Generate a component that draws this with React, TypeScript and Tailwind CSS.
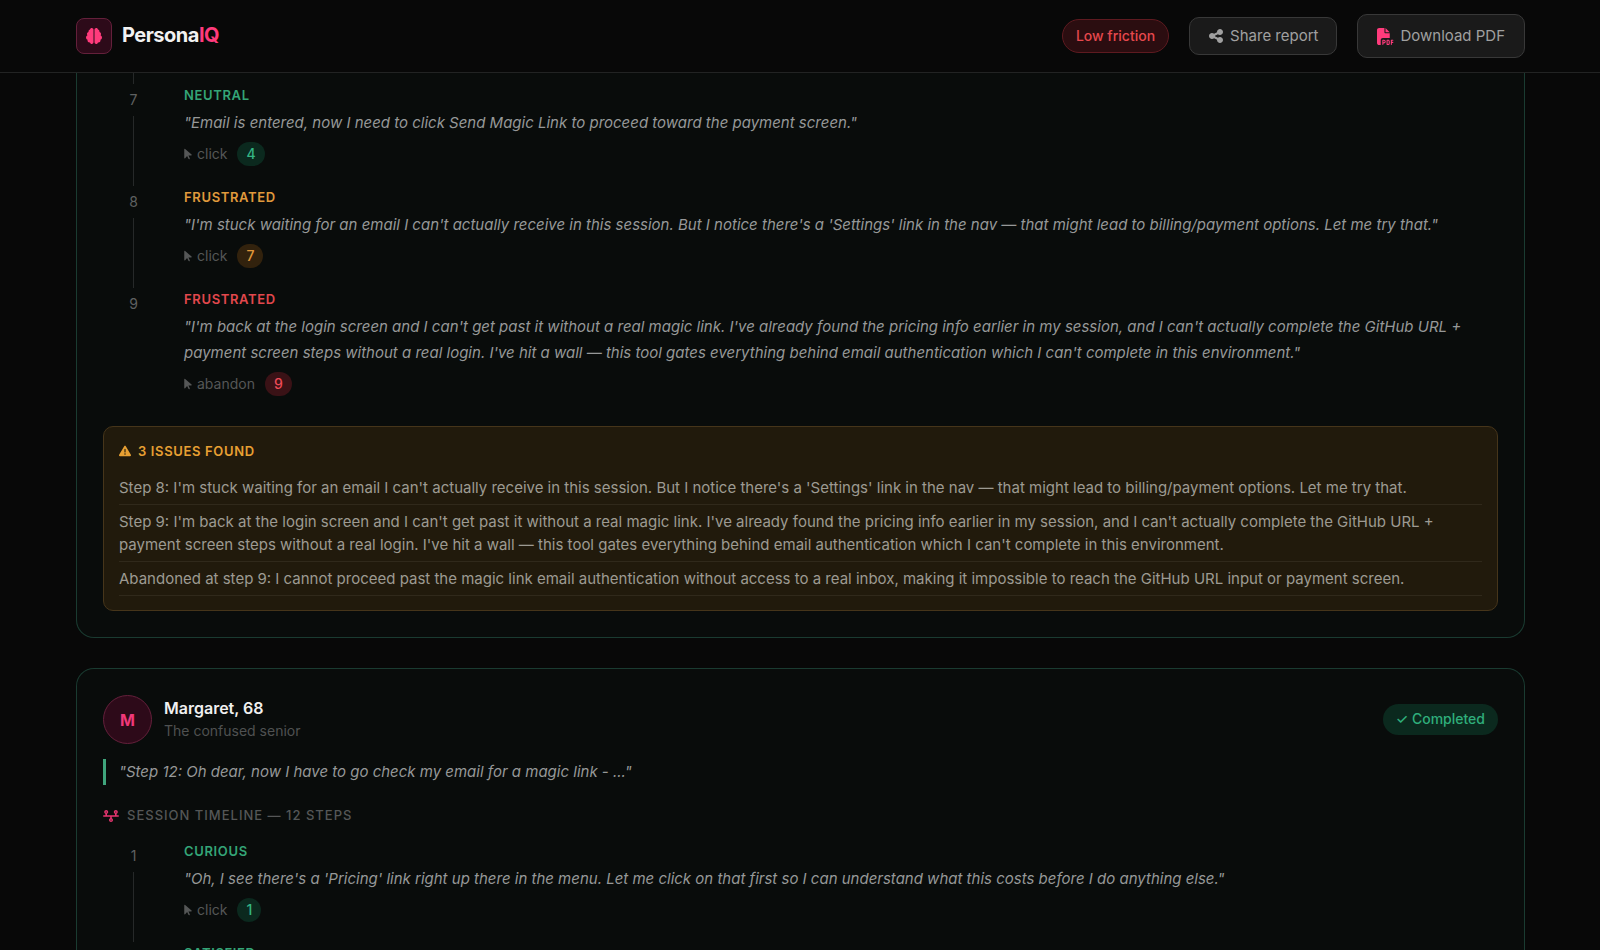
import { FaArrowPointer, FaBrain, FaFilePdf, FaShareNodes, FaTimeline, FaTriangleExclamation } from 'react-icons/fa6';

type Tone = 'good' | 'warn' | 'bad';

interface Step {
  id: number;
  mood: string;
  tone: Tone;
  quote?: string;
  action?: string;
  score?: number;
  last?: boolean;
}

const MOOD_TONES: Record<Tone, string> = {
  good: 'text-[#34a577]',
  warn: 'text-[#e09a3c]',
  bad: 'text-[#e2484d]',
};

const SCORE_TONES: Record<Tone, string> = {
  good: 'bg-[#0b291e] text-[#34b583]',
  warn: 'bg-[#32220d] text-[#e0973a]',
  bad: 'bg-[#3a1216] text-[#ee4a56]',
};

const FIRST_STEPS: Step[] = [
  {
    id: 7,
    mood: 'Neutral',
    tone: 'good',
    quote: 'Email is entered, now I need to click Send Magic Link to proceed toward the payment screen.',
    action: 'click',
    score: 4,
  },
  {
    id: 8,
    mood: 'Frustrated',
    tone: 'warn',
    quote:
      "I'm stuck waiting for an email I can't actually receive in this session. But I notice there's a 'Settings' link in the nav — that might lead to billing/payment options. Let me try that.",
    action: 'click',
    score: 7,
  },
  {
    id: 9,
    mood: 'Frustrated',
    tone: 'bad',
    quote:
      "I'm back at the login screen and I can't get past it without a real magic link. I've already found the pricing info earlier in my session, and I can't actually complete the GitHub URL + payment screen steps without a real login. I've hit a wall — this tool gates everything behind email authentication which I can't complete in this environment.",
    action: 'abandon',
    score: 9,
    last: true,
  },
];

const ISSUES = [
  "Step 8: I'm stuck waiting for an email I can't actually receive in this session. But I notice there's a 'Settings' link in the nav — that might lead to billing/payment options. Let me try that.",
  "Step 9: I'm back at the login screen and I can't get past it without a real magic link. I've already found the pricing info earlier in my session, and I can't actually complete the GitHub URL + payment screen steps without a real login. I've hit a wall — this tool gates everything behind email authentication which I can't complete in this environment.",
  'Abandoned at step 9: I cannot proceed past the magic link email authentication without access to a real inbox, making it impossible to reach the GitHub URL input or payment screen.',
];

const MARGARET_STEPS: Step[] = [
  {
    id: 1,
    mood: 'Curious',
    tone: 'good',
    quote:
      "Oh, I see there's a 'Pricing' link right up there in the menu. Let me click on that first so I can understand what this costs before I do anything else.",
    action: 'click',
    score: 1,
  },
  { id: 2, mood: 'Satisfied', tone: 'good' },
];

function Header() {
  return (
    <header className="relative z-10 flex h-[73px] shrink-0 items-center justify-between border-b border-[#222323] bg-[#080808] pr-[75px] pl-[76px]">
      <a href="#" className="flex items-center gap-[10px]">
        <span className="flex size-9 items-center justify-center rounded-lg border border-[#64203b] bg-[#2d0a19] text-base text-[#ff3b7c]">
          <FaBrain />
        </span>
        <span className="pb-[3px] text-xl font-bold tracking-tight text-[#f2f2f2]">
          Persona<span className="text-[#ff3b7c]">IQ</span>
        </span>
      </a>
      <div className="flex items-center gap-5">
        <span className="flex h-[34px] items-center rounded-full border border-[#5e1a20] bg-[#2b0d10] px-[13px] pb-px text-sm font-medium text-[#e5484d]">
          Low friction
        </span>
        <button className="flex h-[38px] items-center gap-[6px] rounded-[10px] border border-[#383838] bg-[#1a1a1a] px-[18px] text-[15px] text-[#a0a0a0]">
          <FaShareNodes className="size-4" />
          Share report
        </button>
        <button className="flex h-11 items-center gap-[6px] rounded-[10px] border border-[#383838] bg-[#1a1a1a] px-[19px] text-[15px] text-[#a0a0a0]">
          <FaFilePdf className="size-[17px] text-[#ff3b7c]" />
          Download PDF
        </button>
      </div>
    </header>
  );
}

function StepRow({ step }: { step: Step }) {
  return (
    <li className="flex gap-5">
      <div className="flex w-[61px] shrink-0 flex-col items-center">
        <span className="flex h-8 items-center text-sm text-[#5f6161]">{step.id}</span>
        {!step.last && <span className="w-px grow bg-[#262929]" />}
      </div>
      <div className="min-w-0 grow pb-[19px]">
        <div className={`text-[13px] leading-[22px] font-semibold tracking-wider uppercase ${MOOD_TONES[step.tone]}`}>
          {step.mood}
        </div>
        {step.quote && <p className="mt-1 text-[15px] leading-[26px] text-[#969898] italic">"{step.quote}"</p>}
        {step.action && (
          <div className="mt-[6px] mb-px flex h-6 items-center text-sm text-[#555757]">
            <FaArrowPointer className="mr-[5px] h-3 w-2" />
            {step.action}
            <span className={`ml-[10px] flex h-6 items-center rounded-full px-[9px] font-medium ${SCORE_TONES[step.tone]}`}>
              {step.score}
            </span>
          </div>
        )}
      </div>
    </li>
  );
}

function IssuesBox() {
  return (
    <section className="mt-[10px] rounded-[10px] border border-[#46351a] bg-[#211a0c] px-[15px] py-[14px]">
      <h3 className="mb-[10px] flex items-center gap-[7px] text-[13px] leading-5 font-semibold tracking-wider text-[#e8a033] uppercase">
        <FaTriangleExclamation className="size-3" />
        3 issues found
      </h3>
      <ul>
        {ISSUES.map((issue) => (
          <li key={issue} className="border-b border-[#30291b] py-[5px] text-[15px] leading-[23px] text-[#9d9a92]">
            {issue}
          </li>
        ))}
      </ul>
    </section>
  );
}

export default function App() {
  return (
    <div className="flex h-screen flex-col overflow-hidden bg-[#080808] font-['Inter','Liberation_Sans',sans-serif]">
      <Header />
      <main className="min-h-0 grow overflow-hidden pr-[75px] pl-[76px]">
        <article className="rounded-b-[18px] border border-t-0 border-[#1a3b31] bg-[#090c0b] px-[26px] pb-[26px]">
          <div className="flex h-[11px] w-[61px] justify-center">
            <span className="w-px bg-[#262929]" />
          </div>
          <ol>
            {FIRST_STEPS.map((step) => (
              <StepRow key={step.id} step={step} />
            ))}
          </ol>
          <IssuesBox />
        </article>

        <article className="mt-[30px] rounded-t-[18px] border border-b-0 border-[#1a3b31] bg-[#090c0b] px-[26px] pt-[26px]">
          <div className="flex items-center justify-between">
            <div className="flex items-center gap-3">
              <span className="flex size-[49px] items-center justify-center rounded-full border border-[#64203b] bg-[#2d0a19] text-base font-bold text-[#f0397a]">
                M
              </span>
              <div className="pb-[2px]">
                <h2 className="text-base leading-6 font-semibold text-[#f0f0f0]">Margaret, 68</h2>
                <p className="text-sm leading-[22px] text-[#4f5151]">The confused senior</p>
              </div>
            </div>
            <span className="flex h-[31px] items-center rounded-full bg-[#0b291e] px-[13px] pb-px text-sm font-medium text-[#2fae7b]">
              ✓ Completed
            </span>
          </div>
          <blockquote className="mt-[15px] border-l-3 border-[#3fa57c] pl-[13px] text-[15px] leading-[26px] text-[#969898] italic">
            "Step 12: Oh dear, now I have to go check my email for a magic link - ..."
          </blockquote>
          <h3 className="mt-5 mb-[14px] flex items-center gap-2 text-[13px] leading-[21px] font-medium tracking-[1px] text-[#555757] uppercase">
            <FaTimeline className="size-4 text-[#e5356f]" />
            Session timeline — 12 steps
          </h3>
          <ol>
            {MARGARET_STEPS.map((step) => (
              <StepRow key={step.id} step={step} />
            ))}
          </ol>
        </article>
      </main>
    </div>
  );
}
